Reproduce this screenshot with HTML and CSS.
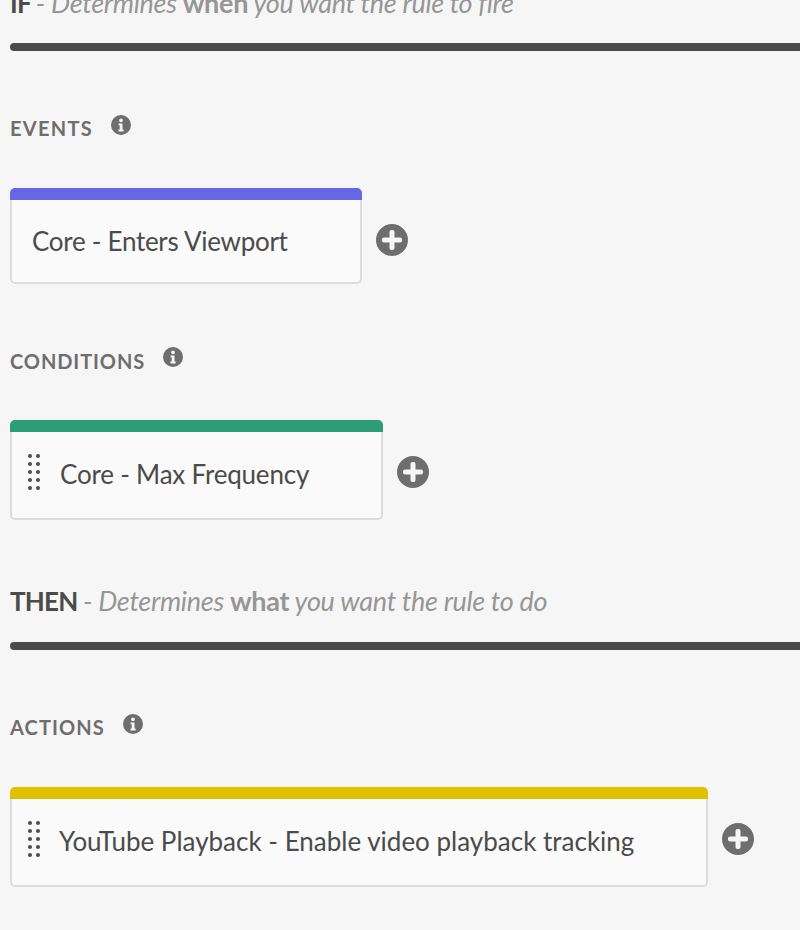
FILE: index.html
```html
<!DOCTYPE html>
<html lang="en">
<head>
    <meta charset="UTF-8">
    <meta name="viewport" content="width=device-width, initial-scale=1.0">
    <title>Rule Editor</title>
    <link rel="stylesheet" href="styles.css">
</head>
<body>
    <svg class="icon-defs" width="0" height="0" aria-hidden="true">
        <symbol id="icon-info" viewBox="0 0 20 20">
            <path fill-rule="evenodd" d="M10 0a10 10 0 1 0 0 20a10 10 0 0 0 0-20zM10 3.4a1.9 1.9 0 1 1 0 3.8a1.9 1.9 0 0 1 0-3.8zM7.6 8.4h3.9v6.2h1.1v1.8H7.5v-1.8h1.2v-4.4H7.6z"/>
        </symbol>
        <symbol id="icon-add" viewBox="0 0 32 32">
            <path fill-rule="evenodd" d="M16 0a16 16 0 1 0 0 32a16 16 0 0 0 0-32zM15.5 6h1a2 2 0 0 1 2 2v5.5H24a2 2 0 0 1 2 2v1a2 2 0 0 1-2 2h-5.5V24a2 2 0 0 1-2 2h-1a2 2 0 0 1-2-2v-5.5H8a2 2 0 0 1-2-2v-1a2 2 0 0 1 2-2h5.5V8a2 2 0 0 1 2-2z"/>
        </symbol>
        <symbol id="icon-drag" viewBox="0 0 12 36">
            <circle cx="2" cy="2" r="2"/><circle cx="10" cy="2" r="2"/>
            <circle cx="2" cy="10" r="2"/><circle cx="10" cy="10" r="2"/>
            <circle cx="2" cy="18" r="2"/><circle cx="10" cy="18" r="2"/>
            <circle cx="2" cy="26" r="2"/><circle cx="10" cy="26" r="2"/>
            <circle cx="2" cy="34" r="2"/><circle cx="10" cy="34" r="2"/>
        </symbol>
    </svg>

    <div class="editor">
        <h2 class="section-title section-if">IF <span class="hint">- Determines <b>when</b> you want the rule to fire</span></h2>
        <div class="rule"></div>

        <div class="group-label events-label">
            <span>EVENTS</span>
            <svg class="info"><use href="#icon-info"/></svg>
        </div>
        <div class="card-row">
            <div class="card card-event">
                <div class="card-body no-handle">
                    <span class="card-text">Core - Enters Viewport</span>
                </div>
            </div>
            <svg class="add"><use href="#icon-add"/></svg>
        </div>

        <div class="group-label conditions-label">
            <span>CONDITIONS</span>
            <svg class="info"><use href="#icon-info"/></svg>
        </div>
        <div class="card-row">
            <div class="card card-condition">
                <div class="card-body">
                    <svg class="drag"><use href="#icon-drag"/></svg>
                    <span class="card-text">Core - Max Frequency</span>
                </div>
            </div>
            <svg class="add"><use href="#icon-add"/></svg>
        </div>

        <h2 class="section-title section-then">THEN <span class="hint">- Determines <b>what</b> you want the rule to do</span></h2>
        <div class="rule"></div>

        <div class="group-label actions-label">
            <span>ACTIONS</span>
            <svg class="info"><use href="#icon-info"/></svg>
        </div>
        <div class="card-row">
            <div class="card card-action">
                <div class="card-body">
                    <svg class="drag"><use href="#icon-drag"/></svg>
                    <span class="card-text">YouTube Playback - Enable video playback tracking</span>
                </div>
            </div>
            <svg class="add"><use href="#icon-add"/></svg>
        </div>
    </div>
</body>
</html>
```

FILE: styles.css
```css
/* Page */
body {
    margin: 0;
    height: 930px;
    overflow: hidden;
    background: #f6f6f6;
    font-family: 'Lato', 'Open Sans', sans-serif;
    color: #4b4b4b;
}

.icon-defs {
    position: absolute;
}

.editor {
    padding-left: 10px;
    margin-top: -13px;
}

/* IF / THEN headings */
.section-title {
    margin: 0;
    height: 32px;
    line-height: 32px;
    font-size: 26px;
    font-weight: 700;
    letter-spacing: -0.8px;
    color: #4b4b4b;
}

.section-then {
    margin-top: 65px;
}

.section-then + .rule {
    margin-top: 25px;
}

.hint {
    font-size: 27px;
    font-weight: 400;
    font-style: italic;
    letter-spacing: -0.3px;
    color: #969696;
}

.hint b {
    font-style: normal;
    font-weight: 700;
}

.rule {
    height: 8px;
    margin-top: 24px;
    border-radius: 4px 0 0 4px;
    background: #4b4b4b;
}

/* EVENTS / CONDITIONS / ACTIONS */
.group-label {
    display: flex;
    align-items: flex-start;
    height: 24px;
    margin-top: 64px;
    font-size: 20px;
    line-height: 24px;
    font-weight: 700;
    letter-spacing: 1.1px;
    color: #6e6e6e;
}

.events-label {
    margin-top: 65px;
    letter-spacing: 1.3px;
}

.actions-label {
    margin-top: 65px;
}

.conditions-label {
    letter-spacing: 0.9px;
}

.conditions-label span {
    margin-top: 1px;
}

.info {
    width: 20px;
    height: 20px;
    margin: -1px 0 0 18px;
    fill: #6e6e6e;
}

/* Rule component cards */
.card-row {
    display: flex;
    align-items: flex-start;
    margin-top: 48px;
}

.card {
    border-radius: 5px;
    border-top: 12px solid;
}

.card-event {
    border-top-color: #6767e6;
    letter-spacing: -0.28px;
}

.card-condition {
    border-top-color: #2d9d78;
    letter-spacing: -0.2px;
}

.card-action {
    border-top-color: #e0c000;
}

.card-body {
    display: flex;
    align-items: center;
    height: 88px;
    padding: 0 72px 6px 16px;
    box-sizing: border-box;
    border: 2px solid #dcdcdc;
    border-top: none;
    border-radius: 0 0 5px 5px;
    background: #fafafa;
    font-size: 26px;
    color: #4b4b4b;
}

.no-handle {
    height: 84px;
    padding-left: 20px;
    padding-bottom: 4px;
}

.card-text {
    margin-top: 4px;
}

.drag {
    width: 12px;
    height: 36px;
    margin-right: 20px;
    fill: #4b4b4b;
}

.card-action .drag {
    margin-right: 19px;
}

.add {
    width: 32px;
    height: 32px;
    margin: 36px 0 0 14px;
    fill: #6e6e6e;
}
```
